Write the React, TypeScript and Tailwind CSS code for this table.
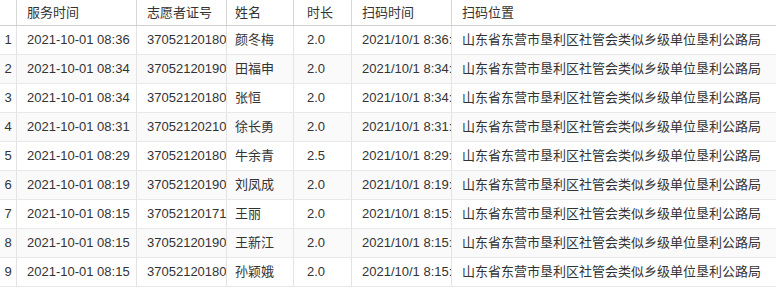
const rows = [
  ["2021-10-01 08:36", "37052120180", "颜冬梅", "2.0", "2021/10/1 8:36:"],
  ["2021-10-01 08:34", "37052120190", "田福申", "2.0", "2021/10/1 8:34:"],
  ["2021-10-01 08:34", "37052120180", "张恒", "2.0", "2021/10/1 8:34:"],
  ["2021-10-01 08:31", "37052120210", "徐长勇", "2.0", "2021/10/1 8:31:"],
  ["2021-10-01 08:29", "37052120180", "牛余青", "2.5", "2021/10/1 8:29:"],
  ["2021-10-01 08:19", "37052120190", "刘凤成", "2.0", "2021/10/1 8:19:"],
  ["2021-10-01 08:15", "37052120171", "王丽", "2.0", "2021/10/1 8:15:"],
  ["2021-10-01 08:15", "37052120190", "王新江", "2.0", "2021/10/1 8:15:"],
  ["2021-10-01 08:15", "37052120180", "孙颖娥", "2.0", "2021/10/1 8:15:"],
];

const place = "山东省东营市垦利区社管会类似乡级单位垦利公路局";

const cols = "grid grid-cols-[17px_120px_90px_67px_58px_100px_1fr]";

export default function App() {
  return (
    <div
      className="w-[776px] h-[288px] overflow-hidden bg-white text-[13px] text-[#333]"
      style={{ fontFamily: '"Liberation Sans", "Noto Sans CJK SC", sans-serif' }}
    >
      <div className={`${cols} h-[26px] border-b border-[#cfcfcf]`}>
        <div className="border-r border-[#d6d6d6]" />
        <div className="border-r border-[#d6d6d6] pl-[10px] flex items-center">服务时间</div>
        <div className="border-r border-[#d6d6d6] pl-[10px] flex items-center">志愿者证号</div>
        <div className="border-r border-[#d6d6d6] pl-[8px] flex items-center">姓名</div>
        <div className="border-r border-[#d6d6d6] pl-[13px] flex items-center">时长</div>
        <div className="border-r border-[#d6d6d6] pl-[10px] flex items-center">扫码时间</div>
        <div className="pl-[10px] flex items-center">扫码位置</div>
      </div>
      {rows.map((r, i) => (
        <div
          key={i}
          className={`${cols} h-[29px] border-b border-[#e8e8e8] whitespace-nowrap ${
            i % 2 === 1 ? "bg-[#fafafa]" : "bg-white"
          }`}
        >
          <div className="border-r border-[#e3e3e3] flex items-center justify-center">{i + 1}</div>
          <div className="border-r border-[#e3e3e3] pl-[10px] flex items-center overflow-hidden">{r[0]}</div>
          <div className="border-r border-[#e3e3e3] pl-[10px] flex items-center overflow-hidden">{r[1]}</div>
          <div className="border-r border-[#e3e3e3] pl-[8px] flex items-center overflow-hidden">{r[2]}</div>
          <div className="border-r border-[#e3e3e3] pl-[13px] flex items-center overflow-hidden">{r[3]}</div>
          <div className="border-r border-[#e3e3e3] pl-[10px] flex items-center overflow-hidden">{r[4]}</div>
          <div className="pl-[10px] flex items-center overflow-hidden">{place}</div>
        </div>
      ))}
    </div>
  );
}
